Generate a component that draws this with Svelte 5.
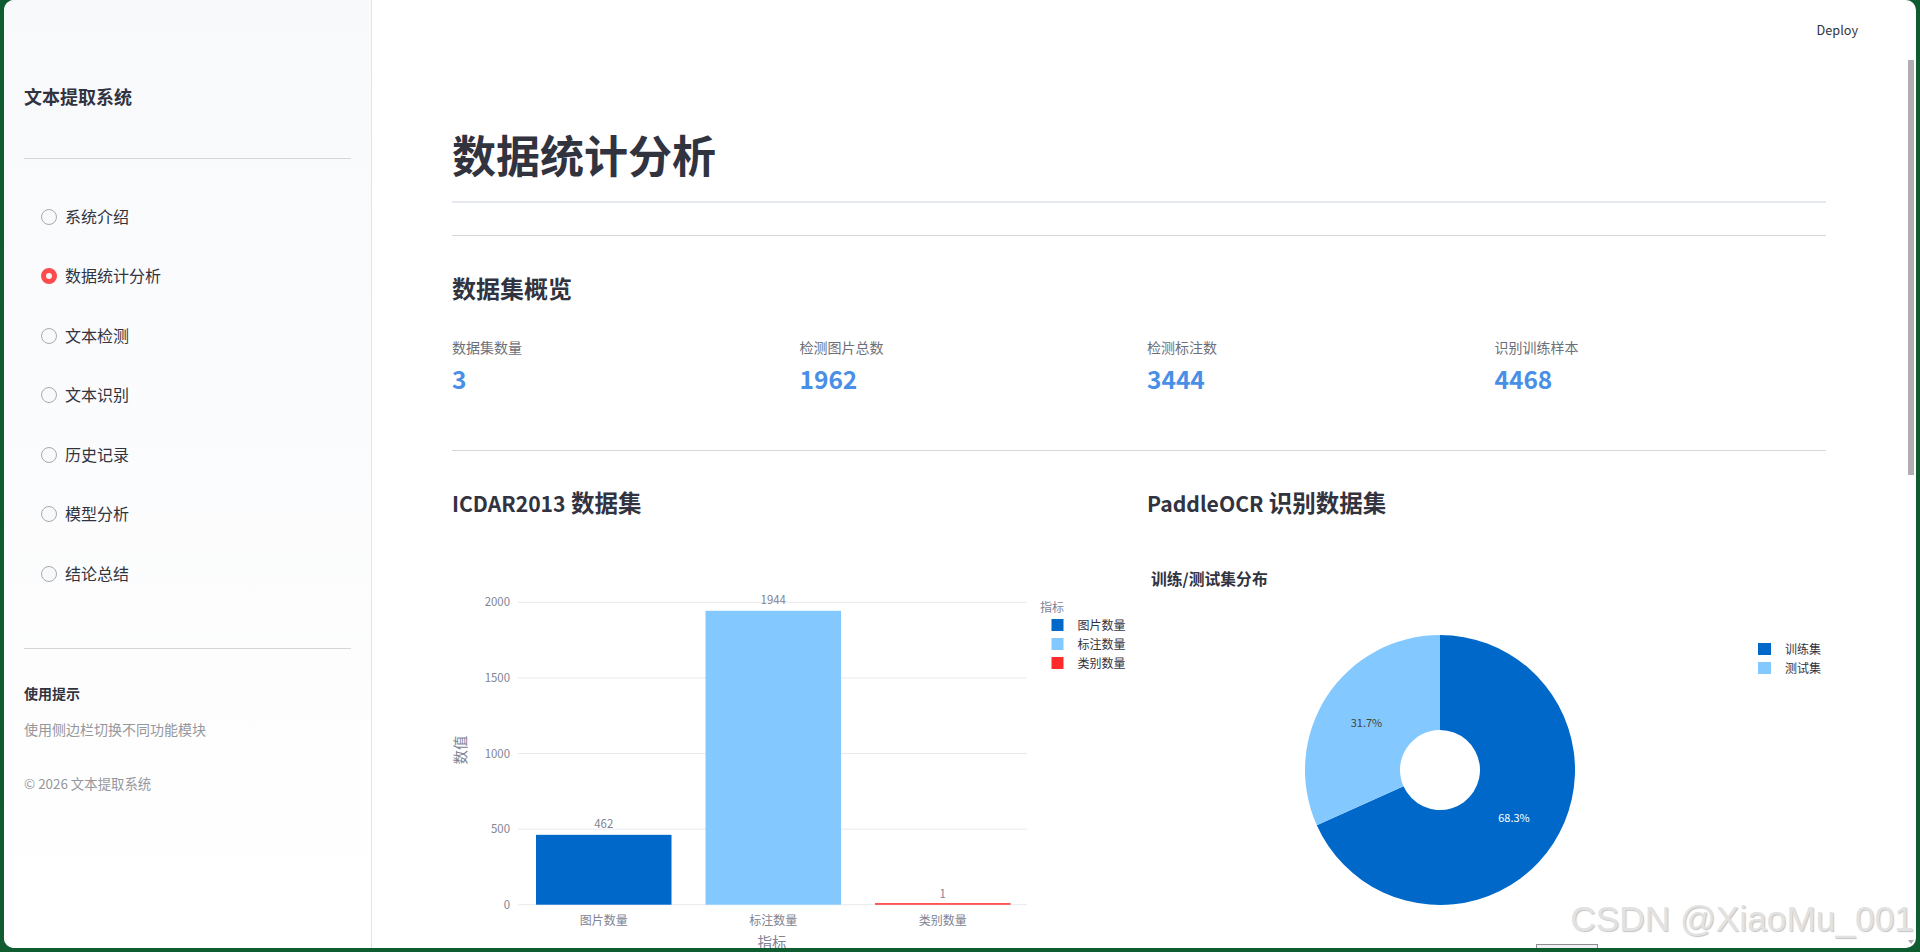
<script>
  const nav = ['系统介绍', '数据统计分析', '文本检测', '文本识别', '历史记录', '模型分析', '结论总结'];
  let selected = $state('数据统计分析');

  const metrics = [
    { label: '数据集数量', value: '3' },
    { label: '检测图片总数', value: '1962' },
    { label: '检测标注数', value: '3444' },
    { label: '识别训练样本', value: '4468' }
  ];

  // Bar chart geometry, in the chart's own coordinates
  const zeroY = 344.7;
  const perUnit = 75.6 / 500;
  const ticks = [0, 500, 1000, 1500, 2000];
  const bars = [
    { name: '图片数量', value: 462, color: '#0068c9', x: 84 },
    { name: '标注数量', value: 1944, color: '#83c9ff', x: 253.5 },
    { name: '类别数量', value: 1, color: '#ff2b2b', x: 423 }
  ];
  const barWidth = 135.5;

  // Donut geometry
  const cx = 293;
  const cy = 210;
  const R = 135;
  const r = 40;
  const share = 0.683;
  const a = share * Math.PI * 2;
  const ox = cx + R * Math.sin(a);
  const oy = cy - R * Math.cos(a);
  const ix = cx + r * Math.sin(a);
  const iy = cy - r * Math.cos(a);
  const train = `M${cx} ${cy - R}A${R} ${R} 0 1 1 ${ox} ${oy}L${ix} ${iy}A${r} ${r} 0 1 0 ${cx} ${cy - r}Z`;
  const test = `M${ox} ${oy}A${R} ${R} 0 0 1 ${cx} ${cy - R}L${cx} ${cy - r}A${r} ${r} 0 0 0 ${ix} ${iy}Z`;
</script>

<div class="frame">
  <div class="window">
    <aside class="sidebar">
      <h2 class="brand">文本提取系统</h2>
      <hr class="rule" />
      <div class="nav">
        {#each nav as item}
          <label class="nav-item">
            <input type="radio" name="page" value={item} bind:group={selected} />
            <span>{item}</span>
          </label>
        {/each}
      </div>
      <hr class="rule tips-rule" />
      <div class="tips-title">使用提示</div>
      <div class="tips-text">使用侧边栏切换不同功能模块</div>
      <div class="copyright">© 2026 文本提取系统</div>
    </aside>

    <main class="main">
      <header class="topbar"><span class="deploy">Deploy</span></header>
      <div class="content">
        <h1>数据统计分析</h1>
        <hr class="rule first" />
        <h2 class="section">数据集概览</h2>
        <div class="metrics">
          {#each metrics as m}
            <div>
              <div class="metric-label">{m.label}</div>
              <div class="metric-value">{m.value}</div>
            </div>
          {/each}
        </div>
        <hr class="rule second" />
        <div class="columns">
          <section>
            <h3><span class="latin">ICDAR2013</span> 数据集</h3>
            <svg class="chart" viewBox="0 0 678 450" width="678" height="450">
              {#each ticks as t}
                <line class="grid" x1="66" x2="575" y1={zeroY - t * perUnit} y2={zeroY - t * perUnit} />
                <text class="tick" x="58" y={zeroY - t * perUnit + 4} text-anchor="end">{t}</text>
              {/each}
              {#each bars as b}
                <rect x={b.x} y={zeroY - Math.max(b.value * perUnit, 1.5)} width={barWidth} height={Math.max(b.value * perUnit, 1.5)} fill={b.color} />
                <text class="tick" x={b.x + barWidth / 2} y={zeroY - b.value * perUnit - 7} text-anchor="middle">{b.value}</text>
                <text class="cat" x={b.x + barWidth / 2} y="365" text-anchor="middle">{b.name}</text>
              {/each}
              <text class="axis" x="320" y="388" text-anchor="middle">指标</text>
              <text class="axis" transform="translate(14 190) rotate(-90)" text-anchor="middle">数值</text>
              <text class="legend-title" x="588" y="52">指标</text>
              {#each bars as b, i}
                <rect x="599.5" y={59 + i * 19} width="12" height="12" fill={b.color} />
                <text class="legend" x="625.5" y={70 + i * 19}>{b.name}</text>
              {/each}
            </svg>
          </section>
          <section>
            <h3><span class="latin">PaddleOCR</span> 识别数据集</h3>
            <svg class="chart" viewBox="0 0 679 450" width="679" height="450">
              <text class="pie-title" x="4" y="25">训练/测试集分布</text>
              <path d={train} fill="#0068c9" />
              <path d={test} fill="#83c9ff" />
              <text class="pct light" x="367" y="262" text-anchor="middle">68.3%</text>
              <text class="pct dark" x="219.5" y="167" text-anchor="middle">31.7%</text>
              <rect x="611" y="83" width="13" height="12" fill="#0068c9" />
              <rect x="611" y="102" width="13" height="12" fill="#83c9ff" />
              <text class="legend" x="638" y="94">训练集</text>
              <text class="legend" x="638" y="113">测试集</text>
            </svg>
          </section>
        </div>
      </div>

      <div class="scrollbar"></div>
      <div class="scroll-arrow"></div>
      <div class="tab"></div>
      <div class="watermark">CSDN @XiaoMu_001</div>
    </main>
  </div>
</div>

<style>
  :global(body) {
    margin: 0;
    background: #0e5c2f;
    overflow: hidden;
  }

  .frame {
    height: 952px;
    box-sizing: border-box;
    padding: 0 4px 4px;
    font-family: "Noto Sans CJK SC", "Noto Sans", sans-serif;
    color: #31333f;
  }

  .window {
    height: 100%;
    display: flex;
    background: #fff;
    border-radius: 10px;
    overflow: hidden;
  }

  .sidebar {
    width: 368px;
    flex: none;
    box-sizing: border-box;
    padding: 83px 20px 0;
    border-right: 1px solid #e2e4e8;
    background: linear-gradient(180deg, #f8f9fb 0%, #ffffff 100%);
  }

  .brand {
    margin: 0;
    font-size: 18px;
    line-height: 26px;
    font-weight: 700;
  }

  .rule {
    margin: 0;
    border: 0;
    border-top: 1px solid #d5d6da;
  }

  .sidebar .rule {
    margin-top: 49px;
  }

  .nav {
    padding: 28px 0 0 17px;
  }

  .nav-item {
    height: 59.5px;
    display: flex;
    align-items: center;
    gap: 8px;
    font-size: 16px;
    line-height: 24px;
  }

  .nav-item span {
    padding-bottom: 2px;
  }

  .nav-item input {
    appearance: none;
    width: 16px;
    height: 16px;
    margin: 0;
    border: 1.25px solid #aaaaaf;
    border-radius: 50%;
    background: #f8f9fb;
  }

  .nav-item input:checked {
    border: 5px solid #ff4b4b;
    background: #f4f5f8;
  }

  .sidebar .tips-rule {
    margin-top: 44px;
  }

  .tips-title {
    margin-top: 34px;
    font-size: 14px;
    line-height: 20px;
    font-weight: 700;
  }

  .tips-text {
    margin-top: 16px;
    font-size: 14px;
    line-height: 20px;
    color: #96979c;
  }

  .copyright {
    margin-top: 34px;
    font-size: 13.4px;
    line-height: 20px;
    color: #96979c;
  }

  .main {
    flex: 1;
    min-width: 0;
    position: relative;
    overflow: hidden;
  }

  .topbar {
    height: 60px;
    box-sizing: border-box;
    display: flex;
    justify-content: flex-end;
    align-items: center;
    padding: 0 58px 2px 0;
  }

  .deploy {
    font-size: 12.7px;
  }

  .content {
    padding: 0 90px 0 80px;
  }

  h1 {
    margin: 64px 0 0;
    padding-bottom: 17px;
    border-bottom: 2px solid #e5e8ec;
    font-size: 44px;
    line-height: 60px;
    font-weight: 700;
  }

  .first {
    margin-top: 32px;
  }

  .section {
    margin: 34px 0 0;
    font-size: 24px;
    line-height: 36px;
    font-weight: 700;
  }

  .metrics {
    margin-top: 31px;
    display: grid;
    grid-template-columns: repeat(4, 1fr);
    gap: 16px;
  }

  .metric-label {
    font-size: 14px;
    line-height: 20px;
    color: #6d6f78;
  }

  .metric-value {
    margin-top: 2px;
    font-size: 24.5px;
    line-height: 40px;
    font-weight: 700;
    color: #4a8fe7;
  }

  .second {
    margin-top: 51px;
  }

  .columns {
    display: grid;
    grid-template-columns: 1fr 1fr;
    gap: 16px;
  }

  h3 {
    margin: 33px 0 0;
    font-size: 23.5px;
    line-height: 36px;
    font-weight: 700;
  }

  .latin {
    font-size: 0.9em;
  }

  .chart {
    display: block;
    margin-top: 39px;
  }

  .grid {
    stroke: #e8eaef;
    stroke-width: 1;
  }

  .tick {
    font-size: 11.4px;
    fill: #808495;
  }

  .cat {
    font-size: 12px;
    fill: #808495;
  }

  .axis {
    font-size: 14.5px;
    fill: #808495;
  }

  .legend-title {
    font-size: 12px;
    fill: #808495;
  }

  .legend {
    font-size: 12px;
    fill: #31333f;
  }

  .pie-title {
    font-size: 15.8px;
    font-weight: 700;
    fill: #31333f;
  }

  .pct {
    font-size: 11px;
  }

  .light {
    fill: #fff;
  }

  .dark {
    fill: #444;
  }

  .scrollbar {
    position: absolute;
    top: 60px;
    right: 2px;
    width: 6px;
    height: 415px;
    background: #b0adb3;
  }

  .scroll-arrow {
    position: absolute;
    right: 2px;
    bottom: 4px;
    width: 0;
    height: 0;
    border: 3px solid transparent;
    border-top: 4px solid #a9a9ad;
    border-bottom: 0;
  }

  .tab {
    position: absolute;
    left: 1164px;
    bottom: -1px;
    width: 60px;
    height: 3px;
    border: 1px solid #8d8d92;
    background: #f0f2f6;
  }

  .watermark {
    position: absolute;
    right: 2px;
    bottom: 9px;
    font-family: "Liberation Sans", Arial, sans-serif;
    font-size: 35.3px;
    line-height: 40px;
    color: #e2e2e2;
    text-shadow: 1px 1px 1px #c4c4c4;
    white-space: nowrap;
  }
</style>
